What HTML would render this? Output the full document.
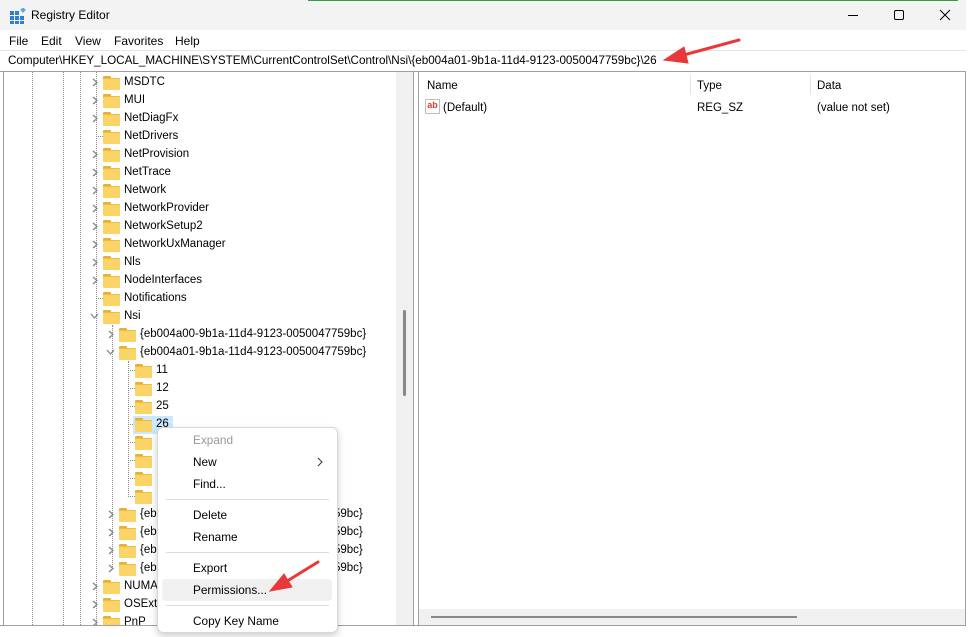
<!DOCTYPE html>
<html><head><meta charset="utf-8"><style>
*{margin:0;padding:0;box-sizing:border-box}
body{width:969px;height:637px;background:#fff;font-family:"Liberation Sans",sans-serif;font-size:11.5px;color:#000;position:relative;overflow:hidden}
.a{position:absolute}
.row{position:absolute;height:18px;line-height:19px;white-space:nowrap}
.fold{position:absolute;width:17px;height:13px;top:3px}
.fold:before{content:"";position:absolute;left:0;top:0;width:8px;height:3px;background:#e8b033;border-radius:1px 1px 0 0}
.fold:after{content:"";position:absolute;left:0;top:2px;width:17px;height:11px;background:#fbd467;border-top:1px solid #eebc3d;border-radius:1px}
.chev{position:absolute;top:5px;width:6px;height:9px}
.chev path{stroke:#808080;stroke-width:1.2;fill:none}
.vd{position:absolute;border-left:1px dotted #888;width:0}
.hd{position:absolute;border-top:1px dotted #888;height:0}
.mi{position:absolute;left:193px;font-size:11.8px}
.sep{position:absolute;left:166px;width:163px;height:1px;background:#ddd}
</style></head><body>
<div class="a" style="left:0;top:0;width:966px;height:30px;background:#f3f3f3"></div>
<div class="a" style="left:308px;top:0;width:650px;height:1px;background:#3c9b3c"></div>
<svg class="a" style="left:10px;top:8px" width="16" height="16"><rect x="0" y="3" width="4" height="4" fill="#2d7fd6"/><rect x="5" y="3" width="4" height="4" fill="#2d7fd6"/><rect x="0" y="8" width="4" height="4" fill="#2d7fd6"/><rect x="5" y="8" width="4" height="4" fill="#2d7fd6"/><rect x="10" y="8" width="4" height="4" fill="#2d7fd6"/><rect x="0" y="13" width="4" height="3" fill="#2d7fd6"/><rect x="5" y="13" width="4" height="3" fill="#2d7fd6"/><rect x="10" y="13" width="4" height="3" fill="#2d7fd6"/><rect x="11" y="0" width="4" height="4" fill="#5aa7f0" transform="rotate(45 13 2)"/></svg>
<div class="a" style="left:31px;top:8px;font-size:12px">Registry Editor</div>
<div class="a" style="left:848px;top:15px;width:10px;height:1px;background:#000"></div>
<div class="a" style="left:894px;top:10px;width:10px;height:10px;border:1px solid #000;border-radius:2px"></div>
<svg class="a" style="left:939px;top:9px" width="12" height="12"><path d="M1 1L11 11M11 1L1 11" stroke="#000" stroke-width="1"/></svg>
<div class="a" style="left:0;top:30px;width:966px;height:20px;background:#fff"></div>
<div class="a" style="left:9px;top:34px;font-size:12px">File</div>
<div class="a" style="left:41px;top:34px;font-size:12px">Edit</div>
<div class="a" style="left:75px;top:34px;font-size:12px">View</div>
<div class="a" style="left:114px;top:34px;font-size:12px">Favorites</div>
<div class="a" style="left:175px;top:34px;font-size:12px">Help</div>
<div class="a" style="left:0;top:50px;width:966px;height:1px;background:#e5e5e5"></div>
<div class="a" style="left:8px;top:54px;font-size:11.7px;letter-spacing:-0.02px">Computer\HKEY_LOCAL_MACHINE\SYSTEM\CurrentControlSet\Control\Nsi\{eb004a01-9b1a-11d4-9123-0050047759bc}\26</div>
<div class="a" style="left:0;top:71px;width:966px;height:1px;background:#a0a0a0"></div>
<div class="a" style="left:3px;top:72px;width:1px;height:553px;background:#a0a0a0"></div>
<div class="a" style="left:396px;top:72px;width:17px;height:553px;background:#f0f0f0"></div>
<div class="a" style="left:403px;top:310px;width:3px;height:86px;background:#888;border-radius:2px"></div>
<div class="a" style="left:413px;top:72px;width:1px;height:553px;background:#a0a0a0"></div>
<div class="a" style="left:418px;top:72px;width:1px;height:553px;background:#a0a0a0"></div>
<div class="vd" style="left:32px;top:72px;height:553px"></div>
<div class="vd" style="left:63px;top:72px;height:553px"></div>
<div class="vd" style="left:80px;top:72px;height:553px"></div>
<div class="vd" style="left:96px;top:72px;height:553px"></div>
<div class="vd" style="left:112px;top:325px;height:244px"></div>
<div class="vd" style="left:128px;top:361px;height:136px"></div>
<div class="hd" style="left:128px;top:370px;width:7px"></div><div class="hd" style="left:128px;top:388px;width:7px"></div><div class="hd" style="left:128px;top:406px;width:7px"></div><div class="hd" style="left:128px;top:424px;width:7px"></div><div class="hd" style="left:128px;top:442px;width:7px"></div><div class="hd" style="left:128px;top:460px;width:7px"></div><div class="hd" style="left:128px;top:478px;width:7px"></div><div class="hd" style="left:128px;top:496px;width:7px"></div>
<div class="hd" style="left:96px;top:136px;width:7px"></div><div class="hd" style="left:96px;top:298px;width:7px"></div>

<div class="row" style="left:90px;top:73px"><svg class="chev" style="left:2px"><path d="M1 1L5 4.5L1 8"/></svg><span class="fold" style="left:13px"></span><span style="position:absolute;left:34px">MSDTC</span></div>
<div class="row" style="left:90px;top:91px"><svg class="chev" style="left:2px"><path d="M1 1L5 4.5L1 8"/></svg><span class="fold" style="left:13px"></span><span style="position:absolute;left:34px">MUI</span></div>
<div class="row" style="left:90px;top:109px"><svg class="chev" style="left:2px"><path d="M1 1L5 4.5L1 8"/></svg><span class="fold" style="left:13px"></span><span style="position:absolute;left:34px">NetDiagFx</span></div>
<div class="row" style="left:90px;top:127px"><span class="fold" style="left:13px"></span><span style="position:absolute;left:34px">NetDrivers</span></div>
<div class="row" style="left:90px;top:145px"><svg class="chev" style="left:2px"><path d="M1 1L5 4.5L1 8"/></svg><span class="fold" style="left:13px"></span><span style="position:absolute;left:34px">NetProvision</span></div>
<div class="row" style="left:90px;top:163px"><svg class="chev" style="left:2px"><path d="M1 1L5 4.5L1 8"/></svg><span class="fold" style="left:13px"></span><span style="position:absolute;left:34px">NetTrace</span></div>
<div class="row" style="left:90px;top:181px"><svg class="chev" style="left:2px"><path d="M1 1L5 4.5L1 8"/></svg><span class="fold" style="left:13px"></span><span style="position:absolute;left:34px">Network</span></div>
<div class="row" style="left:90px;top:199px"><svg class="chev" style="left:2px"><path d="M1 1L5 4.5L1 8"/></svg><span class="fold" style="left:13px"></span><span style="position:absolute;left:34px">NetworkProvider</span></div>
<div class="row" style="left:90px;top:217px"><svg class="chev" style="left:2px"><path d="M1 1L5 4.5L1 8"/></svg><span class="fold" style="left:13px"></span><span style="position:absolute;left:34px">NetworkSetup2</span></div>
<div class="row" style="left:90px;top:235px"><svg class="chev" style="left:2px"><path d="M1 1L5 4.5L1 8"/></svg><span class="fold" style="left:13px"></span><span style="position:absolute;left:34px">NetworkUxManager</span></div>
<div class="row" style="left:90px;top:253px"><svg class="chev" style="left:2px"><path d="M1 1L5 4.5L1 8"/></svg><span class="fold" style="left:13px"></span><span style="position:absolute;left:34px">Nls</span></div>
<div class="row" style="left:90px;top:271px"><svg class="chev" style="left:2px"><path d="M1 1L5 4.5L1 8"/></svg><span class="fold" style="left:13px"></span><span style="position:absolute;left:34px">NodeInterfaces</span></div>
<div class="row" style="left:90px;top:289px"><span class="fold" style="left:13px"></span><span style="position:absolute;left:34px">Notifications</span></div>
<div class="row" style="left:90px;top:307px"><svg class="chev" style="left:0;width:10px;top:6px"><path d="M1 1L4.5 5L8 1"/></svg><span class="fold" style="left:13px"></span><span style="position:absolute;left:34px">Nsi</span></div>
<div class="row" style="left:106px;top:325px"><svg class="chev" style="left:2px"><path d="M1 1L5 4.5L1 8"/></svg><span class="fold" style="left:13px"></span><span style="position:absolute;left:34px">{eb004a00-9b1a-11d4-9123-0050047759bc}</span></div>
<div class="row" style="left:106px;top:343px"><svg class="chev" style="left:0;width:10px;top:6px"><path d="M1 1L4.5 5L8 1"/></svg><span class="fold" style="left:13px"></span><span style="position:absolute;left:34px">{eb004a01-9b1a-11d4-9123-0050047759bc}</span></div>
<div class="row" style="left:122px;top:361px"><span class="fold" style="left:13px"></span><span style="position:absolute;left:34px">11</span></div>
<div class="row" style="left:122px;top:379px"><span class="fold" style="left:13px"></span><span style="position:absolute;left:34px">12</span></div>
<div class="row" style="left:122px;top:397px"><span class="fold" style="left:13px"></span><span style="position:absolute;left:34px">25</span></div>
<div class="a" style="left:133px;top:416px;width:40px;height:18px;background:#cce8ff"></div>
<div class="row" style="left:122px;top:415px"><span class="fold" style="left:13px"></span><span style="position:absolute;left:34px">26</span></div>
<div class="row" style="left:122px;top:433px"><span class="fold" style="left:13px"></span></div>
<div class="row" style="left:122px;top:451px"><span class="fold" style="left:13px"></span></div>
<div class="row" style="left:122px;top:469px"><span class="fold" style="left:13px"></span></div>
<div class="row" style="left:122px;top:487px"><span class="fold" style="left:13px"></span></div>
<div class="row" style="left:106px;top:505px"><svg class="chev" style="left:2px"><path d="M1 1L5 4.5L1 8"/></svg><span class="fold" style="left:13px"></span><span style="position:absolute;left:34px">{eb</span><span style="position:absolute;left:228px">59bc}</span></div>
<div class="row" style="left:106px;top:523px"><svg class="chev" style="left:2px"><path d="M1 1L5 4.5L1 8"/></svg><span class="fold" style="left:13px"></span><span style="position:absolute;left:34px">{eb</span><span style="position:absolute;left:228px">59bc}</span></div>
<div class="row" style="left:106px;top:541px"><svg class="chev" style="left:2px"><path d="M1 1L5 4.5L1 8"/></svg><span class="fold" style="left:13px"></span><span style="position:absolute;left:34px">{eb</span><span style="position:absolute;left:228px">59bc}</span></div>
<div class="row" style="left:106px;top:559px"><svg class="chev" style="left:2px"><path d="M1 1L5 4.5L1 8"/></svg><span class="fold" style="left:13px"></span><span style="position:absolute;left:34px">{eb</span><span style="position:absolute;left:228px">59bc}</span></div>
<div class="row" style="left:90px;top:577px"><svg class="chev" style="left:2px"><path d="M1 1L5 4.5L1 8"/></svg><span class="fold" style="left:13px"></span><span style="position:absolute;left:34px">NUMA</span></div>
<div class="row" style="left:90px;top:595px"><svg class="chev" style="left:2px"><path d="M1 1L5 4.5L1 8"/></svg><span class="fold" style="left:13px"></span><span style="position:absolute;left:34px">OSExt</span></div>
<div class="a" style="left:90px;top:613px;width:70px;height:12px;overflow:hidden"><div class="row" style="left:0;top:0"><svg class="chev" style="left:2px"><path d="M1 1L5 4.5L1 8"/></svg><span class="fold" style="left:13px"></span><span style="position:absolute;left:34px">PnP</span></div></div>

<div class="a" style="left:965px;top:72px;width:1px;height:553px;background:#a0a0a0"></div>
<div class="a" style="left:690px;top:75px;width:1px;height:20px;background:#e5e5e5"></div>
<div class="a" style="left:810px;top:75px;width:1px;height:20px;background:#e5e5e5"></div>
<div class="a" style="left:427px;top:80px">Name</div>
<div class="a" style="left:697px;top:80px">Type</div>
<div class="a" style="left:817px;top:80px">Data</div>
<div class="a" style="left:425px;top:99px;width:15px;height:15px;border:1px solid #bbb;border-radius:1px;font-size:9px;font-weight:bold;color:#d0402a;line-height:11px;text-align:center">ab</div>
<div class="a" style="left:443px;top:102px">(Default)</div>
<div class="a" style="left:697px;top:102px">REG_SZ</div>
<div class="a" style="left:817px;top:102px">(value not set)</div>
<div class="a" style="left:419px;top:609px;width:546px;height:16px;background:#f0f0f0"></div>
<div class="a" style="left:431px;top:616px;width:366px;height:2px;background:#888"></div>
<div class="a" style="left:0;top:625px;width:966px;height:1px;background:#a0a0a0"></div>

<div class="a" style="left:157px;top:427px;width:181px;height:206px;background:#fff;border:1px solid #d8d8d8;border-radius:6px;box-shadow:0 3px 8px rgba(0,0,0,.2)"></div>
<div class="mi" style="top:433px;color:#999">Expand</div>
<div class="mi" style="top:455px">New</div>
<svg class="a" style="left:316px;top:457px" width="8" height="10"><path d="M2 1L6 5L2 9" stroke="#333" fill="none"/></svg>
<div class="mi" style="top:477px">Find...</div>
<div class="sep" style="top:499px"></div>
<div class="mi" style="top:508px">Delete</div>
<div class="mi" style="top:530px">Rename</div>
<div class="sep" style="top:552px"></div>
<div class="a" style="left:162px;top:579px;width:170px;height:22px;background:#f0f0f0;border-radius:4px"></div>
<div class="mi" style="top:561px">Export</div>
<div class="mi" style="top:583px">Permissions...</div>
<div class="sep" style="top:605px"></div>
<div class="mi" style="top:614px">Copy Key Name</div>

<svg class="a" style="left:0;top:0" width="969" height="637"><g stroke="#e8383a" stroke-width="3" fill="#e8383a" stroke-linecap="round">
<path d="M739 40L680 56"/><path d="M664 60L684 47L688 63Z" stroke-width="1"/>
<path d="M318 562L284 583"/><path d="M270 591L284 574L292 587Z" stroke-width="1"/></g></svg>
</body></html>
